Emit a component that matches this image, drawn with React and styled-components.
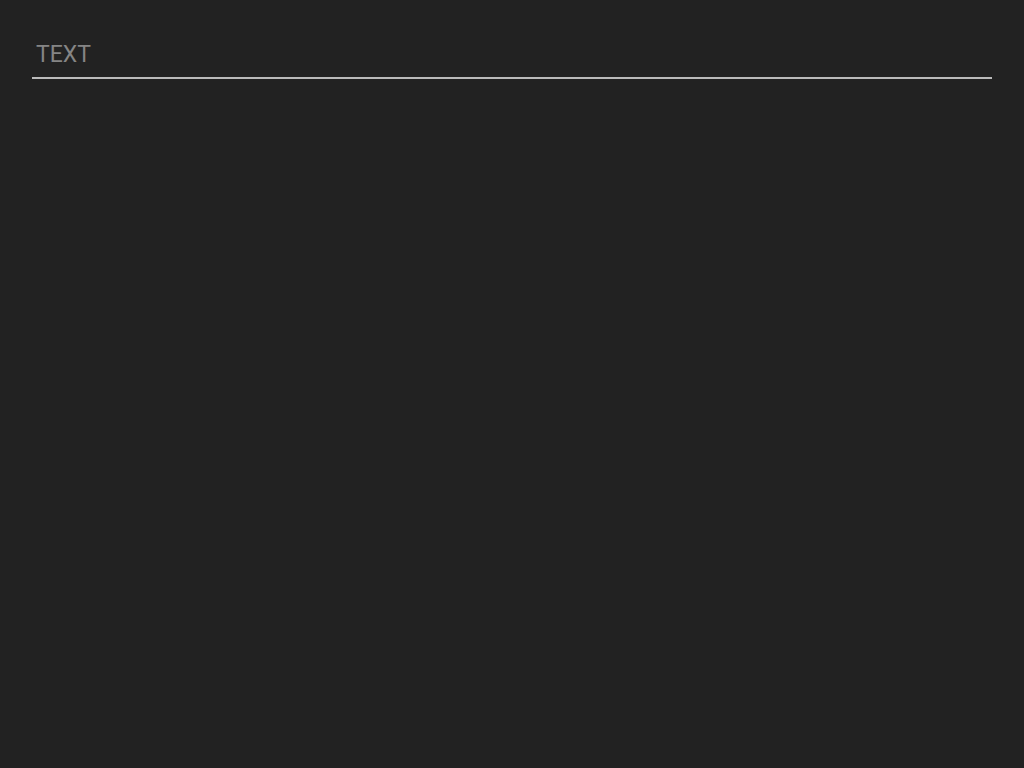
import styled, { createGlobalStyle } from "styled-components";

const Global = createGlobalStyle`
  html, body {
    margin: 0;
    background: #222222;
    height: 100%;
  }
  #root {
    min-height: 100vh;
  }
`;

const Page = styled.div`
  min-height: 100vh;
  background: #222222;
  padding: 32px;
  box-sizing: border-box;
`;

const Field = styled.input`
  display: block;
  width: 100%;
  box-sizing: border-box;
  height: 47px;
  padding: 0 4px;
  background: transparent;
  border: none;
  border-bottom: 2px solid #bbbbbb;
  color: #e0e0e0;
  font-family: Roboto, "Liberation Sans", sans-serif;
  font-size: 23px;
  font-weight: 400;
  outline: none;
  &::placeholder {
    color: #858585;
  }
`;

export default function App() {
  return (
    <Page>
      <Global />
      <Field type="text" placeholder="TEXT" />
    </Page>
  );
}
